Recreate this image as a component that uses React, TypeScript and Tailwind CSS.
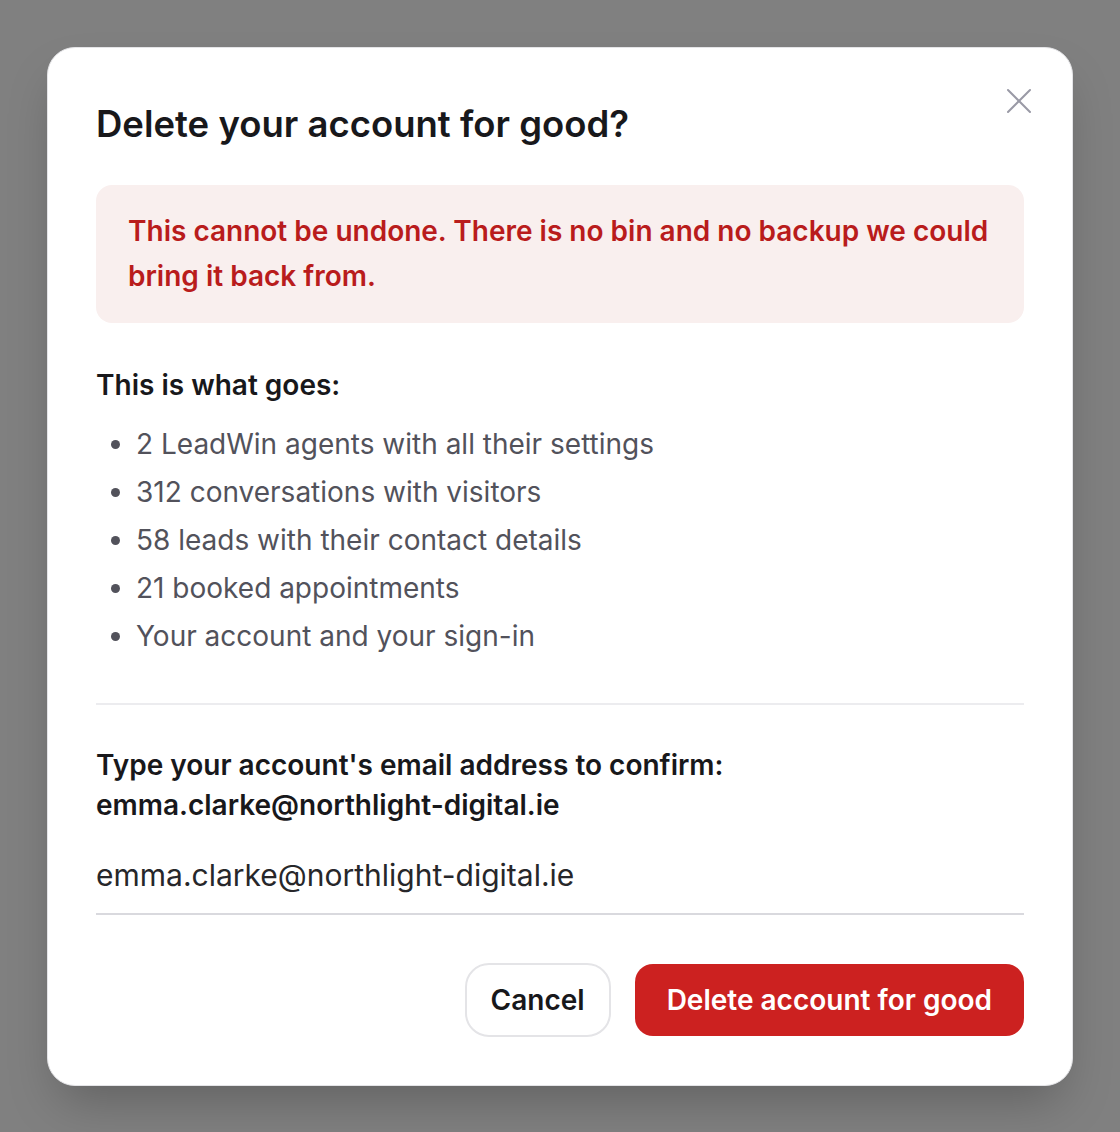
import { X } from "lucide-react";

const items = [
	"2 LeadWin agents with all their settings",
	"312 conversations with visitors",
	"58 leads with their contact details",
	"21 booked appointments",
	"Your account and your sign-in"
];

const DeleteAccountDialog = () => {
	return (
		<div className="relative w-[1026px] rounded-[28px] border border-[#e4e4e7] bg-white p-12 shadow-2xl">
			<button
				type="button"
				aria-label="Close"
				className="absolute right-[31px] top-[31px] text-[#9a9aa6]"
			>
				<X size={44} strokeWidth={1.1} />
			</button>
			<h2 className="text-[36.5px] font-semibold leading-[56px] text-[#18181b]">
				Delete your account for good?
			</h2>
			<div className="mt-[33px] rounded-2xl bg-[#f9efee] px-8 py-6 text-[28px] font-semibold leading-[45px] text-[#b91c1c]">
				This cannot be undone. There is no bin and no backup we could bring it back from.
			</div>
			<h3 className="mt-10 text-[28px] font-semibold leading-[45px] text-[#18181b]">
				This is what goes:
			</h3>
			<ul className="mt-3 list-disc pl-10 text-[28px] leading-[48px] text-[#52525b] marker:text-[#52525b]">
				{items.map((item) => (
					<li key={item}>{item}</li>
				))}
			</ul>
			<div className="mt-[43px] border-t-2 border-[#ececef]" />
			<p className="mt-10 text-[28px] font-semibold leading-10 text-[#18181b]">
				Type your account's email address to confirm:
				<br />
				emma.clarke@northlight-digital.ie
			</p>
			<input
				type="email"
				defaultValue="emma.clarke@northlight-digital.ie"
				className="mt-3 h-[78px] w-full border-b-2 border-[#d9d9de] bg-transparent text-[30px] text-[#27272a] outline-none"
				style={{ fontFamily: "Inter, sans-serif" }}
			/>
			<div className="mt-12 flex items-center justify-end gap-6">
				<button
					type="button"
					className="h-[74px] w-[146px] rounded-[24px] border-2 border-[#e4e4e7] bg-white text-[28px] font-semibold text-[#18181b]"
				>
					Cancel
				</button>
				<button
					type="button"
					className="h-[72px] rounded-[18px] bg-[#cc2120] px-8 text-[28px] font-semibold text-white"
				>
					Delete account for good
				</button>
			</div>
		</div>
	);
};

export default function App() {
	return (
		<div className="flex min-h-screen items-center justify-center bg-[#808080] font-['Inter',sans-serif]">
			<DeleteAccountDialog />
		</div>
	);
}
